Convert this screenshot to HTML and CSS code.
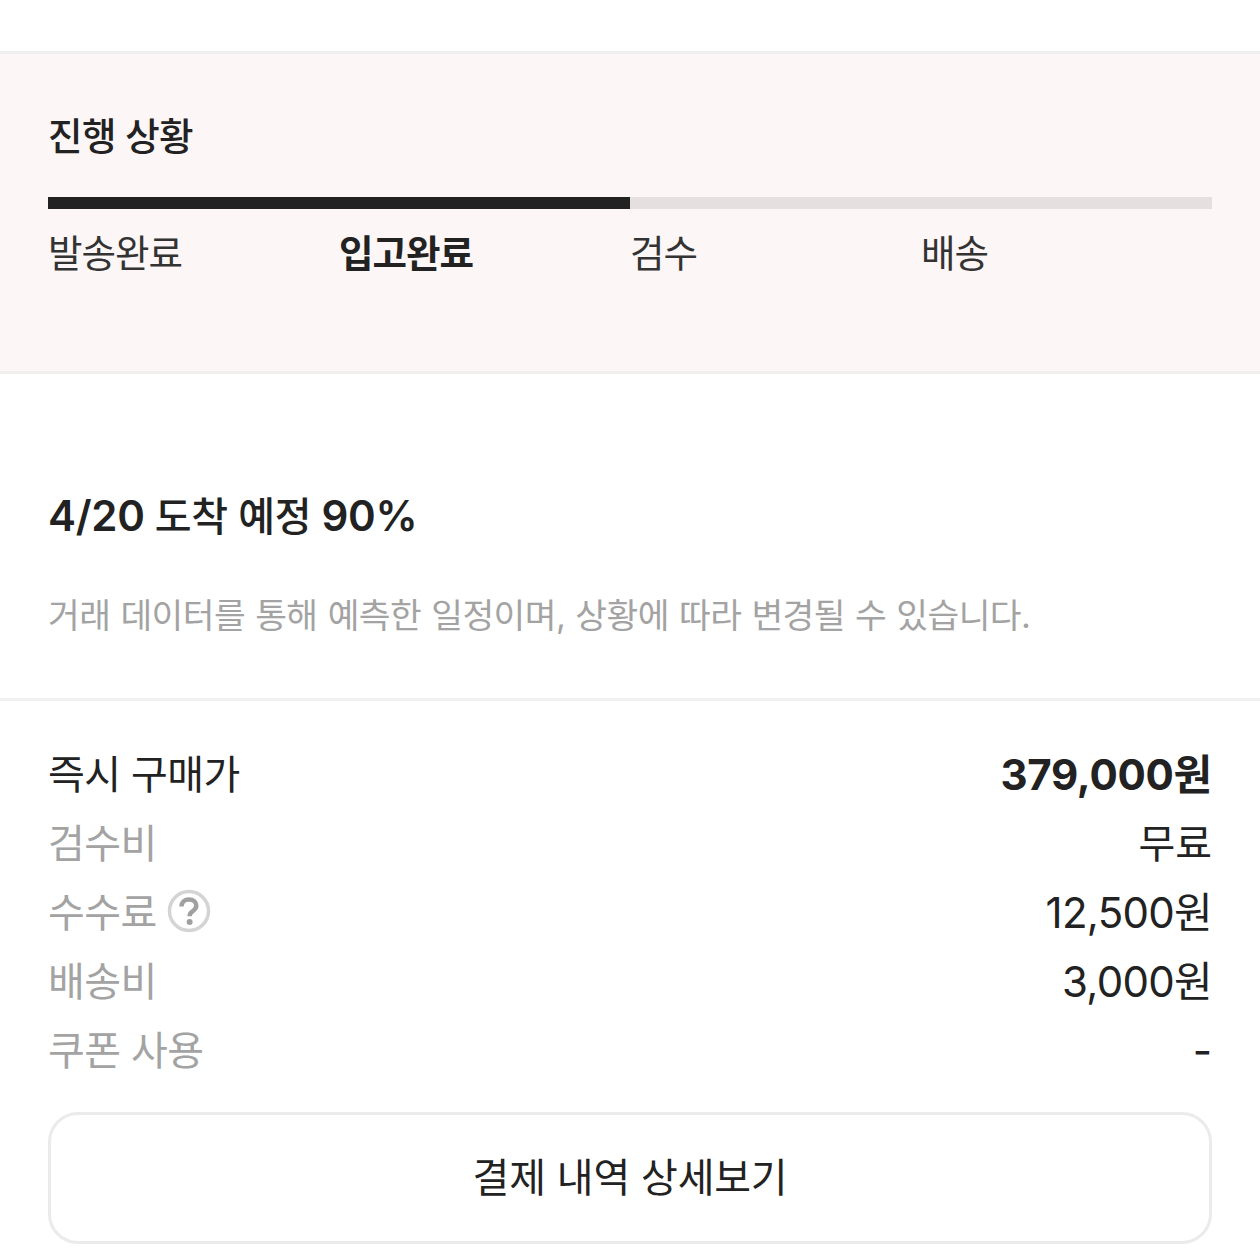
FILE: index.html
```html
<!DOCTYPE html>
<html lang="ko">
<head>
  <meta charset="UTF-8" />
  <title>진행 상황</title>
  <link rel="stylesheet" href="styles.css">
</head>
<body>
  <section class="progress">
    <h2>진행 상황</h2>
    <div class="bar"><div class="bar-fill"></div></div>
    <ul class="steps">
      <li>발송완료</li>
      <li class="active">입고완료</li>
      <li>검수</li>
      <li>배송</li>
    </ul>
  </section>

  <section class="arrival">
    <h3>4/20 <span class="ko">도착 예정</span> 90%</h3>
    <p>거래 데이터를 통해 예측한 일정이며, 상황에 따라 변경될 수 있습니다.</p>
  </section>

  <section class="price">
    <div class="row main"><span class="label">즉시 구매가</span><b>379,000원</b></div>
    <div class="row"><span class="label">검수비</span><span class="free">무료</span></div>
    <div class="row">
      <span class="label with-icon">수수료
        <svg class="help-icon" width="44" height="44" viewBox="0 0 44 44"><circle cx="22" cy="22" r="19.500" fill="none" stroke="#d4d4d4" stroke-width="3.500"/><path d="M14.500 17.500c0-4.500 3-7 7.500-7 4.300 0 7.300 2.500 7.300 6.100 0 2.800-1.500 4.200-3.500 5.500-2.200 1.400-3.200 2.500-3.200 5.200" fill="none" stroke="#a0a0a0" stroke-width="4.500"/><circle cx="22.600" cy="33" r="3" fill="#a0a0a0"/></svg>
      </span>
      <span class="num">12,500원</span>
    </div>
    <div class="row"><span class="label">배송비</span><span class="num">3,000원</span></div>
    <div class="row"><span class="label">쿠폰 사용</span><span class="dash">-</span></div>
    <button class="detail-btn">결제 내역 상세보기</button>
  </section>
</body>
</html>
```

FILE: styles.css
```css
* { box-sizing: border-box; }
html, body { margin: 0; padding: 0; }
body {
  width: 1260px;
  height: 1260px;
  overflow: hidden;
  background: white;
  color: #222;
  font-family: Inter, "Noto Sans CJK KR", sans-serif;
}
.progress {
  margin-top: 51px;
  height: 323px;
  padding: 0 48px;
  background: #fdf6f6;
  border-top: 3px solid #efefef;
  border-bottom: 3px solid #efefef;
}
.progress h2 {
  margin: 0;
  padding-top: 57px;
  height: 143px;
  font-size: 37.5px;
  line-height: 51px;
  font-weight: 500;
  letter-spacing: -0.6px;
}
.bar {
  height: 12px;
  background: #e5dfdf;
}
.bar-fill {
  width: 50%;
  height: 100%;
  background: #222;
}
.steps {
  list-style: none;
  margin: 0;
  padding: 19px 0 0;
  display: grid;
  grid-template-columns: repeat(4, 1fr);
  font-size: 37.5px;
  line-height: 51px;
  letter-spacing: -1px;
  color: #333;
}
.steps .active {
  font-weight: 700;
  color: #222;
}
.arrival {
  height: 327px;
  padding: 0 48px;
  border-bottom: 3px solid #f0f0f0;
}
.arrival h3 {
  margin: 0;
  padding-top: 115px;
  font-size: 42px;
  line-height: 54px;
  font-weight: 600;
  letter-spacing: -0.3px;
}
.arrival h3 .ko {
  font-size: 40px;
  font-weight: 500;
}
.arrival p {
  margin: 48px 0 0;
  font-size: 34.5px;
  line-height: 48px;
  letter-spacing: -0.58px;
  word-spacing: 1px;
  color: #a3a3a3;
}
.price {
  padding: 36px 48px 0;
}
.row {
  display: flex;
  justify-content: space-between;
  align-items: center;
  height: 69px;
  font-size: 42px;
  color: #222;
}
.row b {
  font-weight: 700;
  letter-spacing: -0.25px;
}
.label {
  font-size: 40px;
  color: #a3a3a3;
  letter-spacing: -0.6px;
}
.row.main .label { color: #222; }
.free { font-size: 40px; }
.num { letter-spacing: -0.7px; }
.dash { padding-top: 6px; }
.with-icon {
  display: flex;
  align-items: center;
  gap: 10px;
}
.help-icon { margin-top: 2px; }
.detail-btn {
  display: block;
  width: 100%;
  height: 132px;
  margin-top: 30px;
  padding-bottom: 8px;
  background: white;
  border: 3px solid #ebebeb;
  border-radius: 30px;
  color: #222;
  font-family: inherit;
  font-size: 40px;
  letter-spacing: -0.2px;
}
```
